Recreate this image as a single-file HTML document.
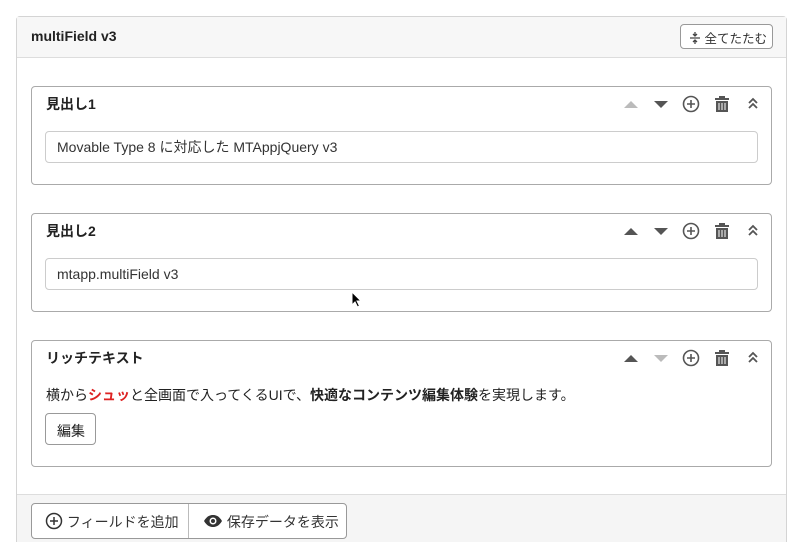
<!DOCTYPE html>
<html><head><meta charset="utf-8"><style>
*{box-sizing:border-box;margin:0;padding:0}
html,body{width:800px;height:542px;overflow:hidden}
body{background:#fff;font-family:"Liberation Sans","Noto Sans CJK JP",sans-serif;color:#222;position:relative}
.card{position:absolute;left:16px;top:16px;width:771px;height:540px;border:1px solid #d4d4d4;border-radius:4px;background:#fff}
.hd{height:41px;background:#f7f7f7;border-bottom:1px solid #ddd;position:relative}
.hd b{position:absolute;left:14px;top:11px;font-size:14px}
.btn{position:absolute;border:1px solid #999;border-radius:4px;background:#fff;font-size:13px;color:#333}
.field{position:absolute;left:14px;width:741px;border:1px solid #aaa;border-radius:4px;background:#fff}
.field .t{position:absolute;left:14px;top:7px;font-size:14px;font-weight:bold}
.field input{position:absolute;left:13px;top:44px;width:713px;height:32px;border:1px solid #ccc;border-radius:4px;padding:0 11px;font-size:14px;font-family:inherit;color:#333}
.ic{position:absolute;top:7px}
.ft{position:absolute;left:0;top:477px;width:769px;height:70px;background:#f5f5f5;border-top:1px solid #ddd}
</style></head><body>
<div class="card">
 <div class="hd"><b>multiField v3</b>
  <div class="btn" style="left:663px;top:7px;width:93px;height:25px;padding:3px 0 0 8px;font-size:12.5px">
   <svg width="12" height="14" viewBox="0 0 12 14" style="vertical-align:-2px"><path d="M1 7h10M6 1v3M4 3l2 2 2-2M6 13v-3M4 11l2-2 2 2" stroke="#444" stroke-width="1.3" fill="none"/></svg> 全てたたむ</div>
 </div>
 <div class="field" style="top:69px;height:99px">
  <div class="t">見出し1</div>
  <svg class="ic" style="left:590px" width="140" height="20" viewBox="0 0 140 20">
   <path d="M2 14l7-7 7 7z" fill="#bbb"/><path d="M32 7h14l-7 7z" fill="#555"/>
   <circle cx="69" cy="10" r="7.5" stroke="#555" stroke-width="1.6" fill="none"/><path d="M69 6v8M65 10h8" stroke="#555" stroke-width="1.6"/>
   <path d="M93 4h14v2h-14zM97 2h6v2h-6zM94 7h12v11h-12z" fill="#555"/><path d="M97 9v7M100 9v7M103 9v7" stroke="#fff" stroke-width="1"/>
   <path d="M127 9l4-4 4 4M127 14l4-4 4 4" stroke="#555" stroke-width="1.8" fill="none"/>
  </svg>
  <input value="Movable Type 8 に対応した MTAppjQuery v3">
 </div>
 <div class="field" style="top:196px;height:99px">
  <div class="t">見出し2</div>
  <svg class="ic" style="left:590px" width="140" height="20" viewBox="0 0 140 20">
   <path d="M2 14l7-7 7 7z" fill="#555"/><path d="M32 7h14l-7 7z" fill="#555"/>
   <circle cx="69" cy="10" r="7.5" stroke="#555" stroke-width="1.6" fill="none"/><path d="M69 6v8M65 10h8" stroke="#555" stroke-width="1.6"/>
   <path d="M93 4h14v2h-14zM97 2h6v2h-6zM94 7h12v11h-12z" fill="#555"/><path d="M97 9v7M100 9v7M103 9v7" stroke="#fff" stroke-width="1"/>
   <path d="M127 9l4-4 4 4M127 14l4-4 4 4" stroke="#555" stroke-width="1.8" fill="none"/>
  </svg>
  <input value="mtapp.multiField v3">
 </div>
 <div class="field" style="top:323px;height:127px">
  <div class="t">リッチテキスト</div>
  <svg class="ic" style="left:590px" width="140" height="20" viewBox="0 0 140 20">
   <path d="M2 14l7-7 7 7z" fill="#555"/><path d="M32 7h14l-7 7z" fill="#bbb"/>
   <circle cx="69" cy="10" r="7.5" stroke="#555" stroke-width="1.6" fill="none"/><path d="M69 6v8M65 10h8" stroke="#555" stroke-width="1.6"/>
   <path d="M93 4h14v2h-14zM97 2h6v2h-6zM94 7h12v11h-12z" fill="#555"/><path d="M97 9v7M100 9v7M103 9v7" stroke="#fff" stroke-width="1"/>
   <path d="M127 9l4-4 4 4M127 14l4-4 4 4" stroke="#555" stroke-width="1.8" fill="none"/>
  </svg>
  <div style="position:absolute;left:14px;top:44px;font-size:14px">横から<b style="color:#d22">シュッ</b>と全画面で入ってくるUIで、<b>快適なコンテンツ編集体験</b>を実現します。</div>
  <div class="btn" style="left:13px;top:72px;width:51px;height:32px;font-size:14px;padding:7px 0 0 11px;color:#222">編集</div>
 </div>
 <div class="ft">
  <div class="btn" style="left:14px;top:8px;width:316px;height:36px;font-size:14px">
   <div style="position:absolute;left:0;top:0;width:157px;height:34px;border-right:1px solid #bbb;padding:8px 0 0 13px">
    <svg width="18" height="18" viewBox="0 0 18 18" style="vertical-align:-3px"><circle cx="9" cy="9" r="7.5" stroke="#333" stroke-width="1.5" fill="none"/><path d="M9 5v8M5 9h8" stroke="#333" stroke-width="1.5"/></svg> フィールドを追加</div>
   <div style="position:absolute;left:158px;top:0;padding:8px 0 0 13px">
    <svg width="20" height="14" viewBox="0 0 20 14" style="vertical-align:-1px"><path d="M1 7C4 2 7 1 10 1s6 1 9 6c-3 5-6 6-9 6S4 12 1 7z" fill="#333"/><circle cx="10" cy="7" r="3.5" fill="#fff"/><circle cx="10" cy="7" r="2" fill="#333"/></svg> 保存データを表示</div>
  </div>
 </div>
</div>
<svg style="position:absolute;left:351px;top:291px" width="12" height="17" viewBox="0 0 12 17"><path d="M1 1v13l3-3 2.5 5 2-1-2.5-5h4z" fill="#000" stroke="#fff" stroke-width="1"/></svg>
</body></html>
